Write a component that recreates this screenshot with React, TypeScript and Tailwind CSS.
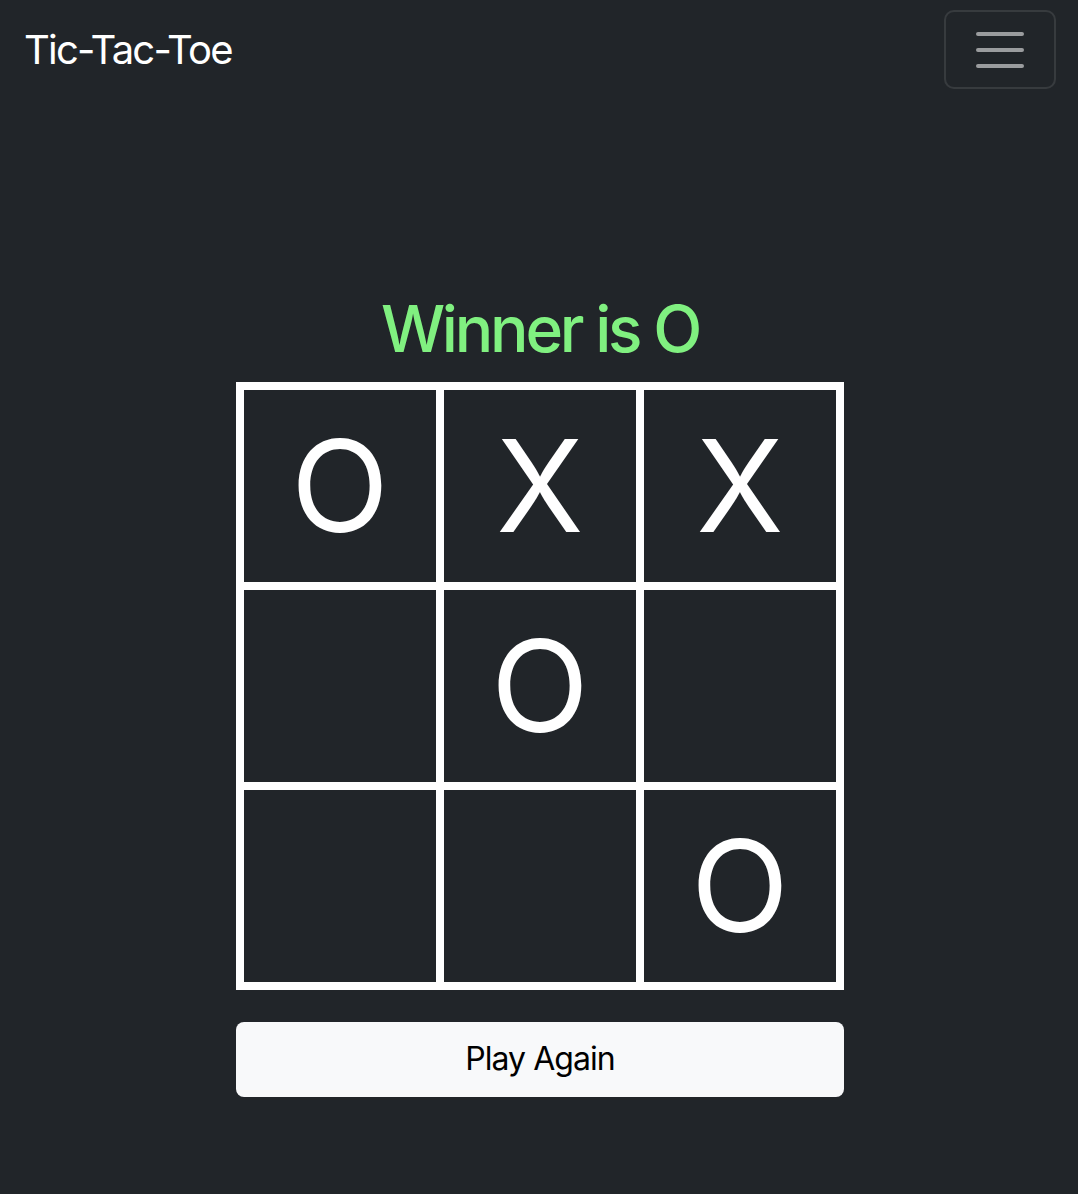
export default function App() {
  const board = ["O", "X", "X", "", "O", "", "", "", "O"];

  return (
    <div className="min-h-[1194px] bg-[#212529] font-['Inter','Liberation_Sans',sans-serif]">
      <nav className="flex items-center justify-between py-[10px] pr-[22px] pl-6">
        <span className="text-[40px] leading-none tracking-[-0.045em] text-white">Tic-Tac-Toe</span>
        <button className="flex h-[79px] w-[112px] items-center justify-center rounded-[10px] border-2 border-white/10">
          <svg width="60" height="60" viewBox="0 0 30 30">
            <path
              d="M4 7h22M4 15h22M4 23h22"
              stroke="rgba(255,255,255,0.55)"
              strokeWidth="2"
              strokeLinecap="round"
              strokeMiterlimit="10"
            />
          </svg>
        </button>
      </nav>

      <main className="mt-[192px] flex flex-col items-center pl-[2px]">
        <h2 className="mb-[14px] text-[64px] leading-[1.2] font-medium tracking-[-0.05em] text-[#80f080]">
          Winner is O
        </h2>

        <div className="grid w-[608px] grid-cols-3 border-4 border-white">
          {board.map((v, i) => (
            <div
              key={i}
              className="flex h-[200px] w-[200px] items-center justify-center border-4 border-white text-[128px] leading-none text-white"
            >
              {v}
            </div>
          ))}
        </div>

        <button className="mt-8 h-[75px] w-[608px] rounded-lg bg-[#f8f9fa] text-[32px] tracking-[-0.03em] text-black">
          Play Again
        </button>
      </main>
    </div>
  );
}
